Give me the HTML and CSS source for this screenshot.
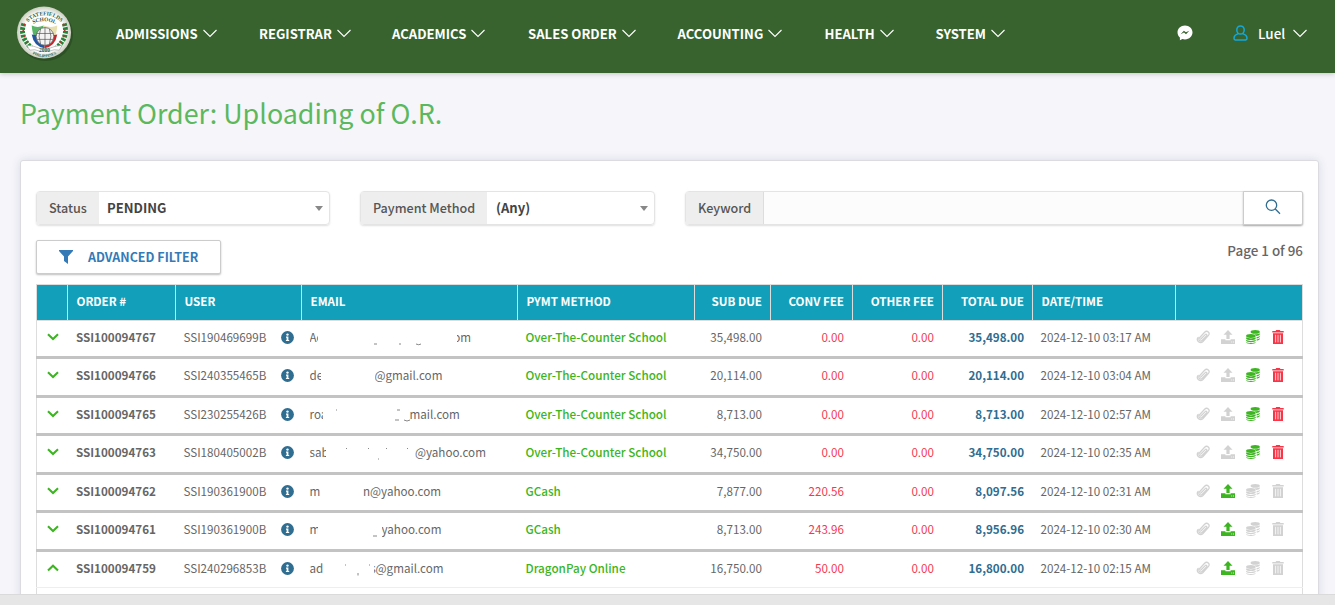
FILE: index.html
```html
<!DOCTYPE html>
<html lang="en">
<head>
<meta charset="utf-8">
<title>Payment Order: Uploading of O.R.</title>
<link rel="stylesheet" href="styles.css">
</head>
<body>
<svg class="defs" width="0" height="0">
  <symbol id="caret" viewBox="0 0 14 9"><path d="M.5 1 7 7.5 13.5 1" fill="none" stroke="currentColor" stroke-width="1.1"/></symbol>
  <symbol id="down" viewBox="0 0 12 8"><path d="M1 1.300 6 6l5-4.700" fill="none" stroke="currentColor" stroke-width="2.100"/></symbol>
  <symbol id="up" viewBox="0 0 12 8"><path d="M1 6.500 6 1.800l5 4.700" fill="none" stroke="currentColor" stroke-width="2.100"/></symbol>
  <symbol id="info" viewBox="0 0 13 13"><circle cx="6.500" cy="6.500" r="6.400" fill="#2f6d91"/><circle cx="6.500" cy="3.600" r="1.200" fill="#fff"/><path d="M5 5.500h2.400v3.400h.8v1.200H4.900V8.900h.7V6.700H5z" fill="#fff"/></symbol>
  <symbol id="clip" viewBox="0 0 14 14"><path d="M4.600 9.200 9.200 4.600c1-1 2.300.3 1.300 1.300L6.300 10.300c-2 2-4.600-.6-2.700-2.600L8.600 2.300c2.600-2.600 6 .8 3.700 3.300L7 11.500c-2.900 3-7.400-.9-4.900-4.200" fill="none" stroke="currentColor" stroke-width="1.250" stroke-linecap="round"/></symbol>
  <symbol id="upload" viewBox="0 0 14 14"><path d="M7 0l4.500 4.800H8.600V9H5.400V4.800H2.500zM0 9.200h4.400v1.100h5.200V9.200H14V14H0z" fill="currentColor"/><path d="M10.300 12h.9M12 12h.9" stroke="#fff" stroke-width=".9"/></symbol>
  <symbol id="coins" viewBox="0 0 14 14"><g fill="currentColor"><ellipse cx="9.200" cy="1.900" rx="4.600" ry="1.800"/><path d="M8.700 4.300c2 .1 4-.3 5.100-1v1c-.2 1-1.700 1.600-3.600 1.800zM10.600 7c1.300-.2 2.500-.6 3.200-1.100v.9c-.2.900-1.500 1.500-3.200 1.700zM10.600 9.400c1.300-.2 2.500-.6 3.200-1.100V9c-.2.900-1.500 1.400-3.200 1.600z"/><ellipse cx="4.900" cy="6" rx="4.800" ry="1.900"/><path d="M.1 7.300c2 1.500 7.600 1.500 9.600 0v1.100c-.5 2-9.100 2-9.600 0zM.1 9.800c2 1.500 7.600 1.500 9.600 0v.9c-.5 1.900-9.100 1.900-9.600 0zM.1 12c2 1.400 7.600 1.400 9.600 0v.3c-.5 2.100-9.100 2.100-9.600 0z"/></g></symbol>
  <symbol id="trash" viewBox="0 0 12 14"><path d="M.3.900h3.300L4.200 0h3.600l.6.900h3.300v1.700H.3zM1 3.300h10V14H1z" fill="currentColor"/><path d="M3.600 4.800v7.600M6 4.800v7.600M8.400 4.800v7.600" stroke="#fff" stroke-width=".9" opacity=".85"/></symbol>
</svg>

<div class="page">
  <header class="nav">
    <svg class="logo" viewBox="0 0 60 60">
      <defs>
        <radialGradient id="seal"><stop offset=".75" stop-color="#fff"/><stop offset="1" stop-color="#c9cdbd"/></radialGradient>
        <path id="arcTop" d="M10 25A21 18 0 0 1 50 25"/><path id="arcMid" d="M17 22Q30 15 43 22"/><path id="arcLow" d="M14 49Q30 61 46 49"/>
      </defs>
      <ellipse cx="31" cy="32" rx="28" ry="27" fill="#20401a" opacity=".5"/>
      <ellipse cx="29.500" cy="30" rx="27.500" ry="26.500" fill="url(#seal)"/>
      <g fill="none" stroke="#23843a" stroke-width="5" stroke-dasharray="2.600 1.200"><path d="M9 21Q4 34 17 46"/><path d="M50 21Q55 34 42 46"/></g>
      <g fill="none" stroke="#b8342c" stroke-width="1.800" stroke-dasharray="1.800 4.500"><path d="M10 21Q5 33 16 43"/><path d="M49 21Q54 33 43 43"/></g>
      <text class="sealtext"><textPath href="#arcTop" startOffset="50%" text-anchor="middle">STATEFIELDS</textPath></text>
      <text class="sealtext"><textPath href="#arcMid" startOffset="50%" text-anchor="middle">SCHOOL</textPath></text>
      <path d="M17 23q6 3 12 0v20q-11-3-12-20z" fill="#57b565"/><path d="M43 23q-6 3-14 0v20q13-2 14-20z" fill="#e8dfae"/>
      <path d="M17 32q2 12 13 14V34z" fill="#1f57a5"/><path d="M43 32q-2 12-13 14V34z" fill="#c6262c"/>
      <circle cx="30.500" cy="34" r="9" fill="#f4f4f4" stroke="#666" stroke-width=".8"/>
      <path d="M22 31h17M22 37h17M30.500 25v18M26 26.500q-3 7 0 15M35 26.500q3 7 0 15" fill="none" stroke="#555" stroke-width=".7"/>
      <path d="M12 43l7 1q11 5 22 0l7-1-3 5-5-.5q-10 4-20 0L15 48z" fill="#fff" stroke="#999" stroke-width=".6"/>
      <text class="sealtext" x="30" y="50" text-anchor="middle">2000</text>
      <text class="sealtext small"><textPath href="#arcLow" startOffset="50%" text-anchor="middle">PHILIPPINES</textPath></text>
    </svg>
    <nav class="menu">
      <a class="m1"><span>ADMISSIONS</span><svg><use href="#caret"/></svg></a>
      <a class="m2"><span>REGISTRAR</span><svg><use href="#caret"/></svg></a>
      <a class="m3"><span>ACADEMICS</span><svg><use href="#caret"/></svg></a>
      <a class="m4"><span>SALES ORDER</span><svg><use href="#caret"/></svg></a>
      <a class="m5"><span>ACCOUNTING</span><svg><use href="#caret"/></svg></a>
      <a class="m6"><span>HEALTH</span><svg><use href="#caret"/></svg></a>
      <a class="m7"><span>SYSTEM</span><svg><use href="#caret"/></svg></a>
    </nav>
    <svg class="chat" viewBox="0 0 16 16"><path d="M8 .4C3.700.4.500 3.400.5 7.300c0 2.100.9 3.900 2.400 5.200v2.800l2.500-1.300c.8.200 1.700.4 2.600.4 4.300 0 7.500-3.100 7.500-7.100S12.300.4 8 .4z" fill="#fff"/><path d="M3.600 9.200 6.900 5.700l2 1.600 3.400-1.600L9 9.200 7 7.600z" fill="#38632f"/></svg>
    <a class="account">
      <svg class="person" viewBox="0 0 15 16"><ellipse cx="7.500" cy="5" rx="3.700" ry="4.100"/><path d="M5.400 8.600C2.500 9.500 1 11 1 13.300c0 1 .4 1.600 1.300 1.600h10.400c.9 0 1.300-.6 1.300-1.600 0-2.300-1.500-3.800-4.400-4.700"/></svg>
      <span>Luel</span><svg class="drop"><use href="#caret"/></svg>
    </a>
  </header>

  <main class="content">
    <h1>Payment Order: Uploading of O.R.</h1>
    <section class="card">
      <div class="filters">
        <div class="field status"><label>Status</label><div class="select"><span>PENDING</span><i></i></div></div>
        <div class="field method"><label>Payment Method</label><div class="select"><span>(Any)</span><i></i></div></div>
        <div class="field keyword"><label>Keyword</label><div class="input"></div>
          <button class="search"><svg viewBox="0 0 16 16"><circle cx="6.500" cy="6.200" r="5.200"/><path d="M10.300 10l4.700 4.700"/></svg></button></div>
      </div>
      <div class="toolbar">
        <button class="advanced"><svg viewBox="0 0 14 14"><path d="M0 0h14v1L9 6.500V14l-4-3V6.500L0 1z" fill="currentColor"/></svg><span>ADVANCED FILTER</span></button>
        <span class="pages">Page 1 of 96</span>
      </div>

      <div class="table">
        <div class="row head"><div></div><div>ORDER #</div><div>USER</div><div>EMAIL</div><div>PYMT METHOD</div><div class="r">SUB DUE</div><div class="r">CONV FEE</div><div class="r">OTHER FEE</div><div class="r">TOTAL DUE</div><div>DATE/TIME</div><div></div></div>

        <div class="row"><div class="tog"><svg><use href="#down"/></svg></div><div class="order">SSI100094767</div><div class="user"><span>SSI190469699B</span><svg><use href="#info"/></svg></div>
          <div class="email e1"><span>Ac</span><span class="tail">om</span><svg class="marks"><path d="M64 23h3M89 23h2M106 23q3 1.500 5 0"/></svg></div>
          <div class="pm">Over-The-Counter School</div><div class="r">35,498.00</div><div class="r red">0.00</div><div class="r red">0.00</div><div class="r total">35,498.00</div><div>2024-12-10 03:17 AM</div>
          <div class="acts"><svg><use href="#clip"/></svg><svg><use href="#upload"/></svg><svg class="green"><use href="#coins"/></svg><svg class="bin"><use href="#trash"/></svg></div></div>

        <div class="row alt"><div class="tog"><svg><use href="#down"/></svg></div><div class="order">SSI100094766</div><div class="user"><span>SSI240355465B</span><svg><use href="#info"/></svg></div>
          <div class="email e2"><span>de</span><span>@gmail.com</span></div>
          <div class="pm">Over-The-Counter School</div><div class="r">20,114.00</div><div class="r red">0.00</div><div class="r red">0.00</div><div class="r total">20,114.00</div><div>2024-12-10 03:04 AM</div>
          <div class="acts"><svg><use href="#clip"/></svg><svg><use href="#upload"/></svg><svg class="green"><use href="#coins"/></svg><svg class="bin"><use href="#trash"/></svg></div></div>

        <div class="row"><div class="tog"><svg><use href="#down"/></svg></div><div class="order">SSI100094765</div><div class="user"><span>SSI230255426B</span><svg><use href="#info"/></svg></div>
          <div class="email e3"><span>roa</span><span>mail.com</span><svg class="marks"><path d="M26 12h1M85 22h4M87 12h3M94 22q3 2 6 0"/></svg></div>
          <div class="pm">Over-The-Counter School</div><div class="r">8,713.00</div><div class="r red">0.00</div><div class="r red">0.00</div><div class="r total">8,713.00</div><div>2024-12-10 02:57 AM</div>
          <div class="acts"><svg><use href="#clip"/></svg><svg><use href="#upload"/></svg><svg class="green"><use href="#coins"/></svg><svg class="bin"><use href="#trash"/></svg></div></div>

        <div class="row alt"><div class="tog"><svg><use href="#down"/></svg></div><div class="order">SSI100094763</div><div class="user"><span>SSI180405002B</span><svg><use href="#info"/></svg></div>
          <div class="email e4"><span>sab</span><span>@yahoo.com</span><svg class="marks"><path d="M36 12.500h1M58 12.500h1M68 23h1M76 12.500h1M97 12.500h1"/></svg></div>
          <div class="pm">Over-The-Counter School</div><div class="r">34,750.00</div><div class="r red">0.00</div><div class="r red">0.00</div><div class="r total">34,750.00</div><div>2024-12-10 02:35 AM</div>
          <div class="acts"><svg><use href="#clip"/></svg><svg><use href="#upload"/></svg><svg class="green"><use href="#coins"/></svg><svg class="bin"><use href="#trash"/></svg></div></div>

        <div class="row"><div class="tog"><svg><use href="#down"/></svg></div><div class="order">SSI100094762</div><div class="user"><span>SSI190361900B</span><svg><use href="#info"/></svg></div>
          <div class="email e5"><span>m</span><span>n@yahoo.com</span></div>
          <div class="pm">GCash</div><div class="r">7,877.00</div><div class="r red">220.56</div><div class="r red">0.00</div><div class="r total">8,097.56</div><div>2024-12-10 02:31 AM</div>
          <div class="acts"><svg><use href="#clip"/></svg><svg class="green"><use href="#upload"/></svg><svg><use href="#coins"/></svg><svg class="binoff"><use href="#trash"/></svg></div></div>

        <div class="row alt"><div class="tog"><svg><use href="#down"/></svg></div><div class="order">SSI100094761</div><div class="user"><span>SSI190361900B</span><svg><use href="#info"/></svg></div>
          <div class="email e6"><span>m</span><span>yahoo.com</span><svg class="marks"><path d="M63 23h4"/></svg></div>
          <div class="pm">GCash</div><div class="r">8,713.00</div><div class="r red">243.96</div><div class="r red">0.00</div><div class="r total">8,956.96</div><div>2024-12-10 02:30 AM</div>
          <div class="acts"><svg><use href="#clip"/></svg><svg class="green"><use href="#upload"/></svg><svg><use href="#coins"/></svg><svg class="binoff"><use href="#trash"/></svg></div></div>

        <div class="row open"><div class="tog"><svg><use href="#up"/></svg></div><div class="order">SSI100094759</div><div class="user"><span>SSI240296853B</span><svg><use href="#info"/></svg></div>
          <div class="email e7"><span>ad</span><span class="tail">s@gmail.com</span><svg class="marks"><path d="M35 13h1M59 13h1M48 21v2.500"/></svg></div>
          <div class="pm">DragonPay Online</div><div class="r">16,750.00</div><div class="r red">50.00</div><div class="r red">0.00</div><div class="r total">16,800.00</div><div>2024-12-10 02:15 AM</div>
          <div class="acts"><svg><use href="#clip"/></svg><svg class="green"><use href="#upload"/></svg><svg><use href="#coins"/></svg><svg class="binoff"><use href="#trash"/></svg></div></div>
      </div>
    </section>
  </main>
  <footer class="bottom"></footer>
</div>
</body>
</html>
```
FILE: styles.css
```css
* { box-sizing: border-box; }
body { margin: 0; background: #fff; overflow: hidden; font-family: "Noto Sans CJK SC", "Noto Sans", sans-serif; color: #666; }
.defs { position: absolute; }
.page { width: 1335px; height: 605px; display: flex; flex-direction: column; background: #f5f5fa; overflow: hidden; }
svg { flex: none; display: block; }

.nav { height: 73px; flex: none; background: #38632f; box-shadow: 0 1px 5px rgba(0,0,0,.2); display: flex; align-items: center; padding: 0 28px 7px 15px; color: #fff; position: relative; }
.logo { width: 59px; height: 59px; margin-bottom: 1px; }
.sealtext { font: bold 5.5px "Liberation Serif", serif; fill: #28593a; }
.small { font-size: 4px; }
.menu { display: flex; margin-left: 42px; flex: 1; font-weight: 700; font-size: 13.1px; }
.menu a { display: flex; align-items: center; flex: none; gap: 5px; white-space: nowrap; }
.menu svg, .drop { width: 14px; height: 9px; }
.m1 { width: 143px; } .m2 { width: 133px; } .m3 { width: 136px; } .m4 { width: 149.500px; } .m5 { width: 147px; } .m6 { width: 111px; }
.chat { width: 16px; height: 16px; margin-right: 40px; }
.account { display: flex; align-items: center; font-size: 13.4px; font-weight: 500; }
.person { width: 15px; height: 16px; margin-right: 10px; fill: none; stroke: #14a9dc; stroke-width: 1.5; }
.account span { width: 35px; }

.content { height: 521px; flex: none; padding: 0 16px 0 20px; overflow: hidden; }
h1 { margin: 0; height: 87px; line-height: 80px; font-weight: 400; font-size: 26.850px; color: #5cb85c; white-space: nowrap; }
.card { height: 460px; background: #fff; border: 1px solid #dcdce0; border-radius: 3px; box-shadow: 0 0 10px rgba(60,60,110,.14); padding: 30px 15px 0; }
.filters { display: flex; height: 34px; gap: 30px; }
.field { display: flex; border: 1px solid #e4e4e4; border-radius: 4px; box-shadow: 0 1px 2px rgba(0,0,0,.13); height: 34px; }
.field label { background: #eee; display: flex; align-items: center; padding: 0 0 2px 12px; font-size: 12.6px; color: #555; font-weight: 500; white-space: nowrap; }
.status { width: 294px; } .status label { width: 62px; }
.method { width: 295px; } .method label { width: 126px; }
.keyword { width: 618px; } .keyword label { width: 77px; }
.select { flex: 1; display: flex; align-items: center; justify-content: space-between; padding: 0 6px 0 8px; font-size: 13.100px; font-weight: 700; color: #444; }
.select span { padding-bottom: 2px; }
.method .select span { padding-left: 1px; }
.select i { border: 4px solid transparent; border-top: 5px solid #888; border-bottom: 0; }
.input { flex: 1; background: #fcfcfc; border-left: 1px solid #ddd; }
button { font-family: inherit; background: #fff; border: 1px solid #ccc; padding: 0; box-shadow: 0 1px 2px rgba(0,0,0,.25); }
.search { width: 60px; height: 34px; margin: -1px; display: flex; justify-content: center; padding-top: 7px; border-radius: 0 2px 2px 0; }
.search svg { width: 16px; height: 16px; fill: none; stroke: #2f6d91; stroke-width: 1.3; }
.toolbar { display: flex; justify-content: space-between; height: 35px; margin-top: 15px; }
.advanced { width: 185px; height: 34px; border-radius: 2px; display: flex; align-items: center; padding-left: 22px; gap: 15px; color: #337ab7; font-size: 12.500px; font-weight: 700; white-space: nowrap; }
.advanced svg { width: 14px; height: 14px; }
.advanced span { padding-bottom: 2px; }
.pages { font-size: 13.400px; line-height: 20px; font-weight: 500; white-space: nowrap; }

.table { margin-top: 9px; width: 1267px; border-left: 1px solid #ddd; border-right: 1px solid #ddd; font-size: 11.64px; height: 340px; }
.row { display: grid; grid-template-columns: 30px 108px 126px 216px 177px 76px 82px 90px 90px 143px 1fr; height: 38.5px; border-bottom: 3px solid #c3c3c3; margin: 0 -1px; padding: 0 1px; }
.row > div { display: flex; align-items: center; padding: 0 0 3px 8.500px; white-space: nowrap; min-width: 0; position: relative; }
.row > .r { justify-content: flex-end; padding: 0 8px 3px 0; }
.row.alt > div { padding-bottom: 4px; }
.row.head { height: 36.5px; background: #129fba; border: 1px solid #ddd; padding: 0; color: #fff; font-weight: 700; font-size: 11.600px; }
.head > div { border-left: 1px solid #ddd; }
.head > div:first-child { border-left: 0; }
.row.open { border-bottom: 1px solid #eee; height: 36px; }
.row > .tog { padding-left: 10px; color: #3cb521; }
.tog svg { width: 12px; height: 8px; }
.row > .order { font-weight: 700; padding-left: 9px; }
.user span { width: 97px; }
.user svg { width: 13px; height: 13px; margin-top: 1px; }
.row > .pm { font-weight: 500; color: #3cb521; font-size: 11.700px; }
.row > .red { color: #f5384f; }
.row > .total { color: #2f6d91; font-weight: 700; }
.row > .acts, .row.alt > .acts { padding-left: 20.500px; padding-bottom: 3px; gap: 11px; color: #d2d2d2; }
.acts svg { width: 14px; height: 14px; }
.acts .bin, .acts .binoff { width: 12px; margin-left: 1px; }
.acts .green { color: #3cb521; }
.acts .bin { color: #fa3547; }
.email span { overflow: hidden; }
.email span:first-child { flex: none; }
.email .tail { display: flex; justify-content: flex-end; flex: none; }
.e1 .tail { width: 14px; }
.e7 .tail { width: 70px; }
.e1 span:first-child { width: 8px; margin-right: 139.500px; }
.e2 span:first-child { width: 11px; margin-right: 54px; }
.e3 span:first-child { width: 13px; margin-right: 87px; }
.e4 span:first-child { width: 16px; margin-right: 89.500px; }
.e5 span:first-child { width: 11px; margin-right: 42.500px; }
.e6 span:first-child { width: 8px; margin-right: 64px; }
.e7 span:first-child { width: 13px; margin-right: 51px; }
.marks { position: absolute; left: 9px; top: 0; width: 200px; height: 30px; fill: none; stroke: #888; stroke-width: 1; }
.bottom { height: 11px; background: #e6e6e6; border-top: 1px solid #dadada; position: relative; }
```
